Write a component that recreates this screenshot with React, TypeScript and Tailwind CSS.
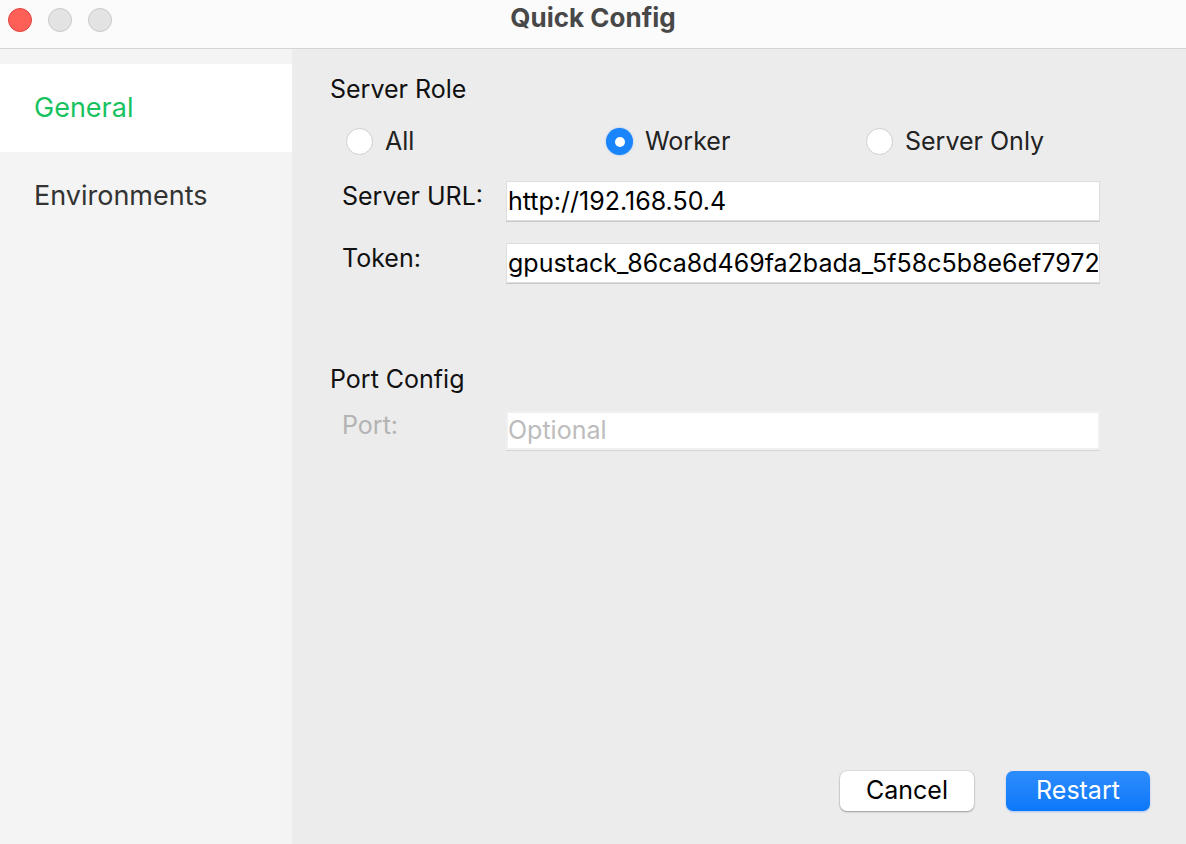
import React, { useState } from "react";

const font = { fontFamily: "Inter, 'Noto Sans', sans-serif" };

type Role = "all" | "worker" | "server";

const Radio: React.FC<{ checked: boolean; label: string; onClick: () => void }> = ({ checked, label, onClick }) => (
  <button type="button" onClick={onClick} className="flex items-center gap-3 text-[25px] text-[#222]">
    {checked ? (
      <span className="w-[27px] h-[27px] rounded-full bg-[#1a84fb] flex items-center justify-center shadow-[0_0_2px_rgba(26,132,251,0.5)]">
        <span className="w-[10px] h-[10px] rounded-full bg-white" />
      </span>
    ) : (
      <span className="w-[27px] h-[27px] rounded-full bg-white border border-[#cfcfcf]" />
    )}
    <span>{label}</span>
  </button>
);

const App: React.FC = () => {
  const [role, setRole] = useState<Role>("worker");
  const [url, setUrl] = useState("http://192.168.50.4");
  const [token, setToken] = useState("gpustack_86ca8d469fa2bada_5f58c5b8e6ef7972b1c4e0d9a3f6");
  const [port, setPort] = useState("");

  return (
    <div style={font} className="w-[1186px] h-[844px] flex flex-col bg-[#ececec] overflow-hidden">
      {/* title bar */}
      <div className="relative h-[49px] shrink-0 bg-[#fbfbfb] border-b border-[#d4d4d4] flex items-center justify-center">
        <div className="absolute left-[8px] top-[8px] flex gap-[16px]">
          <span className="w-[24px] h-[24px] rounded-full bg-[#fe5f57] border border-[#e2463f]" />
          <span className="w-[24px] h-[24px] rounded-full bg-[#e3e3e3] border border-[#c9c9c9]" />
          <span className="w-[24px] h-[24px] rounded-full bg-[#e3e3e3] border border-[#c9c9c9]" />
        </div>
        <h1 className="text-[26px] font-bold text-[#484848] -mt-[13px]">Quick Config</h1>
      </div>

      <div className="flex flex-1 min-h-0">
        {/* sidebar */}
        <div className="w-[292px] shrink-0 bg-[#f4f4f4] pt-[15px]">
          <div className="h-[88px] bg-white flex items-center pl-[34px] text-[27px] text-[#17c25f]">General</div>
          <div className="h-[88px] flex items-center pl-[34px] text-[27px] text-[#333]">Environments</div>
        </div>

        {/* content */}
        <div className="flex-1 flex flex-col pl-[38px] pr-[86px] pt-[24px] pb-[33px]">
          <h2 className="text-[25px] text-[#111] leading-[32px]">Server Role</h2>
          <div className="grid grid-cols-[260px_260px_1fr] pl-[16px] mt-[18px]">
            <Radio checked={role === "all"} label="All" onClick={() => setRole("all")} />
            <Radio checked={role === "worker"} label="Worker" onClick={() => setRole("worker")} />
            <Radio checked={role === "server"} label="Server Only" onClick={() => setRole("server")} />
          </div>

          <div className="grid grid-cols-[164px_1fr] items-center gap-y-[22px] pl-[12px] mt-[20px]">
            <label className="text-[25px] text-[#111] -mt-[8px]">Server URL:</label>
            <input
              value={url}
              onChange={(e) => setUrl(e.target.value)}
              className="h-[40px] bg-white border border-[#dedede] shadow-[0_1px_0_#c8c8c8] px-[1px] text-[25px] text-black outline-none"
            />
            <label className="text-[25px] text-[#111] -mt-[8px]">Token:</label>
            <input
              value={token}
              onChange={(e) => setToken(e.target.value)}
              className="h-[40px] bg-white border border-[#dedede] shadow-[0_1px_0_#c8c8c8] px-[1px] text-[25px] text-black outline-none"
            />
          </div>

          <h2 className="text-[25px] text-[#111] leading-[32px] mt-[80px]">Port Config</h2>
          <div className="grid grid-cols-[164px_1fr] items-center pl-[12px] mt-[16px]">
            <label className="text-[25px] text-[#b3b3b3] -mt-[8px]">Port:</label>
            <input
              value={port}
              onChange={(e) => setPort(e.target.value)}
              placeholder="Optional"
              className="h-[39px] bg-white border-[2px] border-[#f0f0f0] shadow-[0_1px_0_#d6d6d6] px-0 text-[25px] text-black placeholder:text-[#bcbcbc] outline-none"
            />
          </div>

          <div className="mt-auto flex justify-end gap-[32px] -mr-[50px]">
            <button className="w-[134px] h-[40px] rounded-[7px] bg-white text-[25px] text-black shadow-[0_0_0_1px_rgba(0,0,0,0.06),0_1px_2px_rgba(0,0,0,0.3)]">
              Cancel
            </button>
            <button className="w-[144px] h-[40px] rounded-[7px] bg-gradient-to-b from-[#2c8cfb] to-[#0a78fa] text-[25px] text-white shadow-[0_1px_2px_rgba(0,100,255,0.3)]">
              Restart
            </button>
          </div>
        </div>
      </div>
    </div>
  );
};

export default App;
